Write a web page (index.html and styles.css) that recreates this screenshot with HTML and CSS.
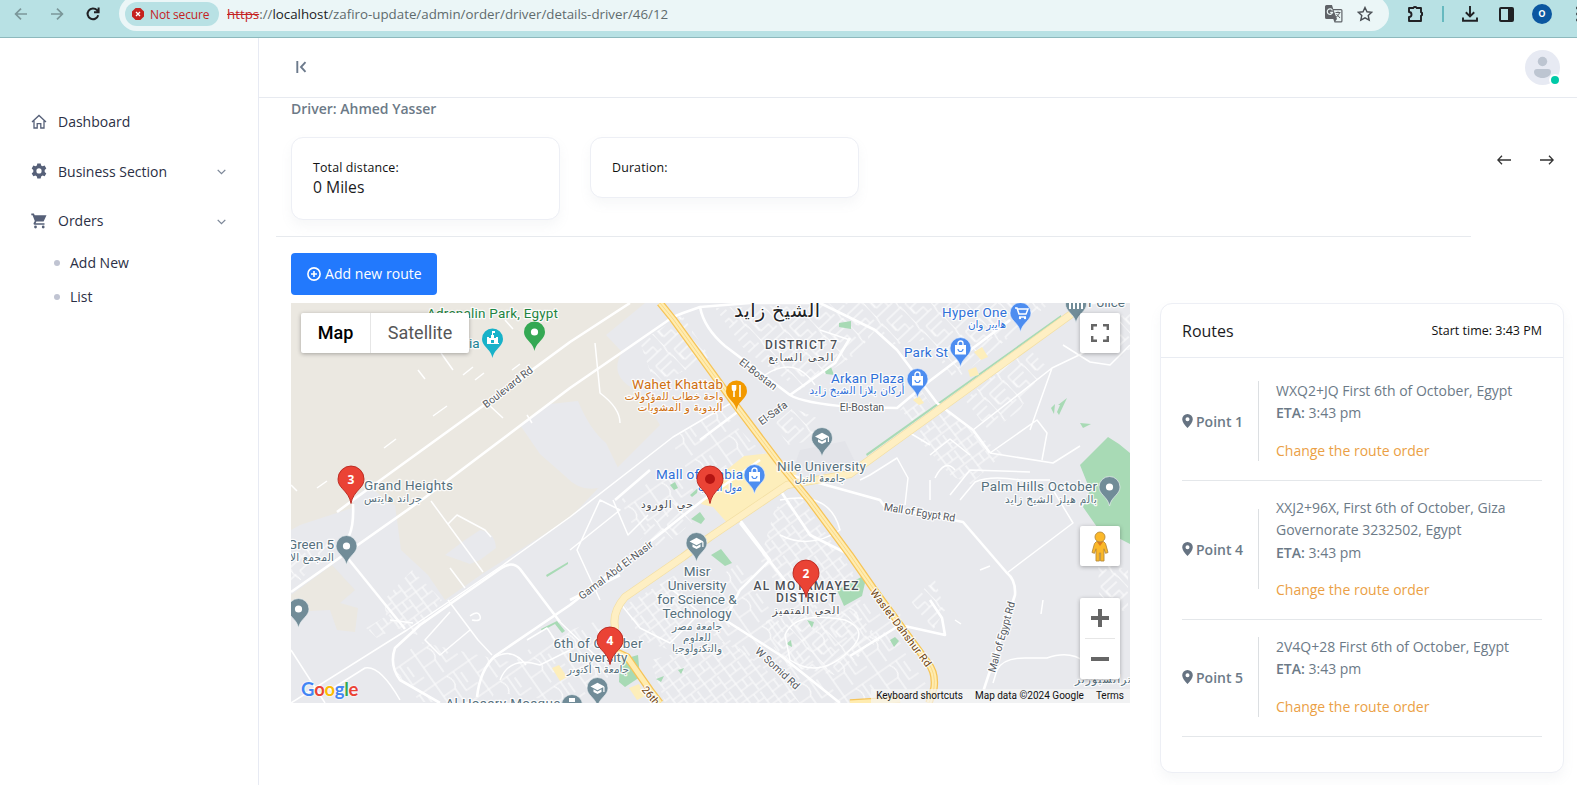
FILE: index.html
```html
<!DOCTYPE html>
<html lang="en">
<head>
<meta charset="utf-8">
<title>Driver details</title>
<link rel="stylesheet" href="styles.css">
</head>
<body>
<div class="browser">
  <div class="nav-btns">
    <svg width="14" height="14" viewBox="0 0 14 14" class="ico dim"><path d="M13 7H2M7 1.6L1.6 7L7 12.4"/></svg>
    <svg width="14" height="14" viewBox="0 0 14 14" class="ico dim"><path d="M1 7h11M7 1.6L12.400 7L7 12.400"/></svg>
    <svg width="14" height="14" viewBox="0 0 14 14" class="ico dark"><path d="M12.200 8.200A5.400 5.400 0 1 1 11 3.200L12.500 5M12.600 .6V5.200H8"/></svg>
  </div>
  <div class="omnibox">
    <div class="chip">
      <svg width="12" height="12" viewBox="0 0 12 12"><path fill="#c5221f" d="M3.600 0h4.800L12 3.600v4.800L8.400 12H3.600L0 8.400V3.600z"/><path d="M4 4l4 4M8 4l-4 4" stroke="#fff" stroke-width="1.300"/></svg>
      <span>Not secure</span>
    </div>
    <div class="url"><s>https</s>://<b>localhost</b>/zafiro-update/admin/order/driver/details-driver/46/12</div>
    <svg class="translate" width="18" height="18" viewBox="0 0 18 18"><path fill="#5f6368" d="M1.500 0H7l1.200 4H16a1.500 1.500 0 0 1 1.500 1.500v10.500a1.500 1.500 0 0 1-1.500 1.500H9.500L8.300 14H1.500A1.500 1.500 0 0 1 0 12.500v-11A1.500 1.500 0 0 1 1.500 0z"/><path fill="#eaf6f6" d="M8.600 5.200H16.300V16.300H10.300L12 14z"/><path d="M7.400 5.400A2.700 2.700 0 1 0 7.600 7.300H5.200" fill="none" stroke="#eaf6f6" stroke-width="1.200"/><path d="M10.500 7.500h5M13 6.500v1M14.500 7.700c-.5 2-2 3.600-3.500 4.400M11.500 9l3.500 4" fill="none" stroke="#5f6368"/></svg>
    <svg width="16" height="16" viewBox="0 0 16 16"><path d="M8 1.500l2 4.300 4.700.5-3.500 3.200 1 4.700L8 11.800l-4.200 2.400 1-4.700L1.300 6.300 6 5.800z" fill="none" stroke="#4a4f54" stroke-width="1.400"/></svg>
  </div>
  <div class="tools">
    <svg width="18" height="18" viewBox="0 0 18 18"><path d="M2 3h4.200a2 2 0 0 1 3.600 0H14v4.200a2 2 0 0 1 0 3.600V16H2v-4a2.500 2.500 0 0 0 0-5z" fill="none" stroke="#202124" stroke-width="1.900" stroke-linejoin="round"/><path d="M6.500 1.500h3V3h-3zM14.500 7.500H16v3h-1.500z" fill="#202124"/></svg>
    <i class="sep"></i>
    <svg class="dl" width="16" height="18" viewBox="0 0 16 18"><path d="M8 1v10M3.800 7.300L8 11.400l4.200-4.100M1 12.500v3.300h14v-3.300" fill="none" stroke="#202124" stroke-width="1.900"/></svg>
    <svg class="panel" width="15" height="15" viewBox="0 0 15 15"><rect x="1" y="1" width="13" height="13" rx="1" fill="none" stroke="#202124" stroke-width="2"/><path d="M9 1h5v13H9z" fill="#202124"/></svg>
    <span class="profile">o</span>
    <svg class="more" width="4" height="18" viewBox="0 0 4 18" fill="#202124"><circle cx="2" cy="3" r="1.800"/><circle cx="2" cy="9" r="1.800"/><circle cx="2" cy="15" r="1.800"/></svg>
  </div>
</div>

<div class="shell">
  <aside class="sidebar">
    <a class="nav"><svg width="16" height="16" viewBox="0 0 16 16"><path d="M1 8L8 1.500 15 8M3 6.800V14h3.200V9.700h3.600V14H13V6.800" fill="none" stroke="#566078" stroke-width="1.300"/></svg><span>Dashboard</span></a>
    <a class="nav"><svg width="16" height="16" viewBox="0 0 16 16"><path fill="#566078" fill-rule="evenodd" d="M6.300.5h3.400l.4 2 1.500.8 2-.7 1.700 2.900-1.600 1.400v2l1.600 1.500-1.700 2.900-2-.7-1.500.8-.4 2.100H6.300l-.4-2.100-1.500-.8-2 .7L.7 10.400l1.600-1.500v-2L.7 5.500l1.700-2.900 2 .7 1.500-.8zM8 5.300a2.600 2.600 0 1 0 0 5.200 2.600 2.600 0 0 0 0-5.200z"/></svg><span>Business Section</span><svg class="chev" width="9" height="6" viewBox="0 0 9 6"><path d="M.7.900L4.500 4.700 8.300.9"/></svg></a>
    <a class="nav"><svg width="16" height="16" viewBox="0 0 16 16" fill="#566078"><path d="M.3.600h2.600l.8 1.600H15.500L12.600 8.600H5.400L4.600 10.200h8.900v1.500H3.600c-1 0-1.300-1-.9-1.700l1.100-2L1.600 2.200H.3z"/><circle cx="4.500" cy="14" r="1.400"/><circle cx="12.200" cy="14" r="1.400"/></svg><span>Orders</span><svg class="chev" width="9" height="6" viewBox="0 0 9 6"><path d="M.7.900L4.500 4.700 8.300.9"/></svg></a>
    <a class="sub">Add New</a>
    <a class="sub">List</a>
  </aside>

  <div class="main">
    <header class="topbar">
      <svg width="11" height="12" viewBox="0 0 11 12"><path d="M1.300 0v12M9.500 1.200L5 6 9.500 10.800" fill="none" stroke="#6c7a8c" stroke-width="1.900"/></svg>
      <div class="avatar"><svg width="35" height="35" viewBox="0 0 35 35"><circle cx="17.500" cy="17.500" r="17.500" fill="#e7eaf3"/><circle cx="17.500" cy="11.500" r="4.700" fill="#bdc5d1"/><path d="M9 22a3 3 0 0 1 3-3h11a3 3 0 0 1 3 3c0 3.500-4 6-8.500 6S9 25.500 9 22z" fill="#bdc5d1"/></svg><i></i></div>
    </header>

    <div class="driver">Driver: Ahmed Yasser</div>
    <div class="stats">
      <div class="card stat"><small>Total distance:</small><div>0 Miles</div></div>
      <div class="card stat"><small>Duration:</small></div>
      <div class="pager">
        <svg width="14" height="10" viewBox="0 0 14 10"><path d="M14 5H1M5 .7L.8 5 5 9.300"/></svg>
        <svg width="14" height="10" viewBox="0 0 14 10"><path d="M0 5h13M9 .7L13.200 5 9 9.300"/></svg>
      </div>
    </div>
    <div class="rule"></div>
    <button class="add"><svg width="14" height="14" viewBox="0 0 14 14"><circle cx="7" cy="7" r="6.100"/><path d="M7 4v6M4 7h6"/></svg><span>Add new route</span></button>

    <div class="content">
      <div class="map">
        <svg class="tiles" width="839" height="400" viewBox="291 303 839 400">
          <defs>
            <pattern id="g1" width="25" height="19" patternUnits="userSpaceOnUse" patternTransform="rotate(-37)"><path d="M0 1H25M0 10H15M1 0V19M9 1V10M16 3V19M16 14H25" class="st"/></pattern>
            <pattern id="g2" width="31" height="25" patternUnits="userSpaceOnUse" patternTransform="rotate(47)"><path d="M0 2Q15 -2 31 2M2 0V20M9 5v14h8V9h7v16M2 20H16M24 4V12" class="st"/></pattern>
            <pattern id="g3" width="41" height="35" patternUnits="userSpaceOnUse" patternTransform="rotate(-35)"><path d="M0 5H41M5 0V35M19 5Q25 14 19 20H5M19 20V35M27 5V28H41M33 10v12" class="st"/></pattern>
            <path id="poi" d="M0 19C-1 14-3.500 11.500-6.500 8.200C-9 5.500-10.500 3.300-10.500 0A10.500 10.500 0 0 1 10.500 0C10.500 3.300 9 5.500 6.500 8.200C3.500 11.500 1 14 0 19z"/>
            <path id="marker" d="M0 24.500C-1 18-4.500 14-8.500 9.700C-11.500 6.500-13 4-13 0A13 13 0 0 1 13 0C13 4 11.500 6.500 8.500 9.700C4.500 14 1 18 0 24.500z"/>
            <g id="bag" fill="#fff"><path d="M-5.500-3h11V6.500h-11z"/><path d="M-2.500-3v-1.500a2.500 2.500 0 0 1 5 0V-3" fill="none" stroke="#fff" stroke-width="1.400"/><path d="M-2.500 1a2.500 2.500 0 0 0 5 0" fill="none" stroke="#4d8df0" stroke-width="1.200"/></g>
            <g id="cap" fill="#fff"><path d="M-7-1.500L0-5.300 7-1.500 0 2.300zM-4 1.300L0 3.500 4 1.300V4L0 6-4 4zM5.800-1H7V4H5.800z"/></g>
          </defs>
          <rect x="291" y="303" width="839" height="400" fill="#e8e9ed"/>
          <path fill="#ebe8e1" d="M291 303H645L606 335 622 352Q607 378 640 392L660 425 620 465 570 518 482 574 445 600 428 575 401 550 395 505 378 500 352 508 300 525 291 530z"/>
          <path fill="#e8e9ed" d="M520 425L550 404 578 401Q590 430 606 443L621 474 598 488Q580 492 565 476L540 454zM445 555L465 540 480 530Q495 532 496 548L480 560 470 564zM352 499l17-14 14 13-10 13-18-3z"/>
          <path fill="#ebe8e1" d="M291 595L332 565 355 590 340 603 358 608 355 632 337 630 330 610 291 612z"/>

          <g opacity=".85">
          <path fill="url(#g2)" d="M640 342L682 315 710 357 655 386zM775 423l18-15 24 10-6 23-24 4z"/>
          <path fill="url(#g2)" d="M715 308L840 303 880 325 855 355 800 390 745 350zM845 303H1050L1000 345 955 380 925 340 890 345zM965 400l60-55 20 20-25 45-30 22z"/>
          <path fill="url(#g1)" d="M915 435l30-25 58 44-32 30-20-8zM900 410l20-22 12 18-20 15zM384 600l28-30 30 30-25 35-30-10zM366 628l24-14 10 12-23 12z"/>
          <path fill="url(#g3)" d="M670 440L720 410 765 455 735 490 690 475zM620 500l50-30 30 20-60 50z"/>
          <path fill="url(#g1)" d="M775 508L800 496 855 575 800 618 760 560zM625 605L675 575 690 610 670 650 640 640zM650 660L730 640 790 690 800 703H665z"/>
          <path fill="url(#g3)" d="M705 585L745 560 770 610 860 600 900 645 930 690 910 703H800L760 665 705 630zM480 690L540 640 600 620 610 690 570 703zM850 600l50 10 5 60-45-20zM390 665l30-23 90 20-20 40H420z"/>
          <path fill="url(#g2)" d="M640 530l35-30 20 20-35 30zM910 600l25-20 10 30-12 20zM291 545l40-5-30 40-10 2zM1100 330l30-20v40h-20zM1098 560l30 10v40l-28 5zM765 620l90-10 25 30-45 35-55-10z"/>
          </g>

          <g fill="#a8dab5">
            <path d="M1080 465L1108 437 1119 444 1130 453V544L1097 527 1083 507 1090 490zM837 590l30-16-5 22-18 10zM711 555l10-6 11 14-7 3zM691 519l9-7 5 7-4 5zM620 660l18-5 2 22-15 10-6-5zM541 629l16-8 8 10-3 2-7-9-13 7zM546 575l22-13v2l-21 13zM1051 408l4-4 -1 10zM1058 405l9-7-8 17-2-3 3-7zM1080 423l11 1-8 4zM839 323l12-2v8l-12-2zM824 369l7-2 3 8-8-1zM670 485l5-3 3 6-4 2zM690 495l8-7-1 5-5 4zM656 679l8-3-3 6zM678 670l6-2-3 6zM786 644l5-4 1 7zM807 620l7 2-2 6zM890 640l5-3 4 4-5 6z"/>
            <path d="M866 454L1061 315 1061 317 867 456z"/>
          </g>
          <g fill="#fdeebb"><path d="M701 504l18-28 25-20 28-3 25 20-18 22-50 30-16-18zM974 352l8-5 6 10-7 3zM968 370l8-3 3 8-9 2zM913 400l6-4 5 7-5 2zM552 668l7-3 8 12-7 4zM629 688l10-4 6 12-8 4z"/></g>
          <path fill="#e3e4e9" d="M800 450l45-9 10 21-30 12-30-10z"/>

          <g class="road">
            <path d="M337 512L353 500 487 403 570 342 630 303"/>
            <path d="M291 592L423 499 570 388 673 317"/>
            <path d="M353 504Q354 525 349 536L346 556 405 629"/>
            <path class="n" d="M291 703L407 630 503 565 570 517 673 437 707 417 745 395"/>
            <path d="M440 703L400 680Q389 665 395 648L420 625 500 569Q512 560 520 569L560 622"/>
            <path d="M477 697Q480 670 495 656L570 605 703 500 760 460"/>
            <path d="M673 317L683 313 700 307Q704 328 725 346L790 395Q803 403 850 407L897 408 927 383 1010 320"/>
            <path d="M790 395L835 363 850 338M700 307L750 303M748 303L820 303 875 330 897 350 937 403 973 430 990 453"/>
            <path class="n" d="M990 453L1037 420 1047 433 1042 460M990 453L1053 463 1080 446M973 430L1052 368 1100 345M1052 368L1030 430M1063 345L1090 362 1110 365 1130 345"/>
            <path d="M790 475L880 500 885 507 963 522 1007 573Q1016 580 1015 595L983 692"/>
            <path class="n" d="M1007 573L1073 523 1050 485M860 480L870 475 897 458 908 478 905 505M960 500L975 482Q990 475 1020 480L1050 480M930 500L930 480M950 495l20-25 60 2"/>
            <path class="n" d="M993 683L997 670Q1003 658 1025 658L1047 658Q1070 650 1085 662"/>
            <path class="n" d="M431 501L483 572M448 524L457 515 485 530 491 537M450 568L465 588M448 600L478 640 492 655M450 612L425 640 440 655 470 630"/>
            <path d="M570 600L620 575M615 500L650 470M740 520L770 560 740 590 725 620M740 523L800 600M725 620L780 655 840 703"/>
            <path class="n" d="M560 622L600 660M413 623L390 620M291 650L325 703M330 690L365 668Q380 665 400 700M570 550L620 510 600 500 577 550 600 600M613 500l15 35 20-20M620 603l20 25 30 15 30-30-30-25"/>
            <path d="M850 656L900 625 945 635 942 618 930 600M780 490l30 45 40 20M770 453L740 410 700 440"/>
          </g>
          <g class="road n">
            <path d="M595 343l5 50q20 15 20 30M441 353l12 17M418 370l7 9M463 375l10-8M475 380l9-7M433 416l14-10M384 448l12-9M489 405l14 13M527 415l5 8M505 320l8 9M490 350l12-8M291 485l6 6M317 488l10-7M512 370l8-6M1043 600l-2 14M980 570l10-4M955 620l6 4"/>
            <path d="M765 375q30-20 50 10M820 330l30 10M780 500q50-10 60 30q-30 20-60 5M790 660q30 20 60-10q20-20-5-30q-50-10-60 15z"/>
            <path d="M491 660q20-15 35 5M500 680q10-25 40-15l30-15M527 640l20-12 10 15M470 616q8-6 10 0t-8 4M930 455l20-16 20 16M935 478q10-20 20-8M905 430l25 15"/>
          </g>

          <g class="hw o"><path d="M1077 310L850 474 787 485 710 537 683 557 625 597Q612 612 615 627L610 645"/></g>
          <g class="hw i"><path d="M1077 310L850 474 787 485 710 537 683 557 625 597Q612 612 615 627L610 645"/></g>
          <path class="hwm o" d="M660 303L673 319 737 407 783 468 810 501 850 555 873 588 928 663Q936 673 934 688L929 703M612 650L627 657 650 690 660 703M850 703L900 700"/>
          <path class="hwm i" d="M660 303L673 319 737 407 783 468 810 501 850 555 873 588 928 663Q936 673 934 688L929 703M612 650L627 657 650 690 660 703M850 703L900 700"/>
          <path class="hwm m" d="M660 303L673 319 737 407 783 468 810 501 850 555 873 588 928 663Q936 673 934 688L929 703"/>

          <g class="lb slate">
            <text x="364" y="490" textLength="89">Grand Heights</text>
            <text x="288" y="549" textLength="46">Green 5</text>
            <text x="777" y="471" textLength="89">Nile University</text>
            <text x="981" y="491" textLength="116">Palm Hills October</text>
            <text x="1088" y="307">Police</text>
            <g text-anchor="middle">
              <text x="697" y="576">Misr</text><text x="697" y="590">University</text><text x="697" y="604">for Science &amp;</text><text x="697" y="618">Technology</text>
              <text x="598" y="648" textLength="89">6th of October</text><text x="598" y="662">University</text>
              <text x="503" y="708" textLength="115">Al Hosary Mosque</text>
            </g>
          </g>
          <g class="lb ar slate" text-anchor="middle">
            <text x="393" y="502" textLength="58">جراند هايتس</text>
            <text x="312" y="561" textLength="44">المجمع الا</text>
            <text x="820" y="482" textLength="51">جامعة النيل</text>
            <text x="1051" y="503" textLength="92">بالم هيلز الشيخ زايد</text>
            <text x="697" y="630" textLength="50">جامعة مصر</text><text x="697" y="641" textLength="28">للعلوم</text><text x="697" y="652" textLength="50">والتكنولوجيا</text>
            <text x="598" y="673" textLength="62">جامعة ٦ أكتوبر</text>
            <text x="1103" y="683" textLength="56">ترانسبورتر</text>
          </g>
          <g class="lb blue">
            <text x="656" y="479" textLength="87">Mall of Arabia</text>
            <text x="942" y="317" textLength="65">Hyper One</text>
            <text x="904" y="357" textLength="44">Park St</text>
            <text x="831" y="383" textLength="73">Arkan Plaza</text>
          </g>
          <g class="lb ar blue" text-anchor="middle">
            <text x="720" y="491" textLength="44">مول العرب</text><text x="987" y="328" textLength="38">هايبر وان</text><text x="857" y="394" textLength="95">أركان بلازا الشيخ زايد</text>
          </g>
          <g class="lb green"><text x="427" y="318" textLength="131">Adrenalin Park, Egypt</text></g>
          <g class="lb teal"><text x="469" y="348">ia</text></g>
          <g class="lb orange"><text x="632" y="389" textLength="91">Wahet Khattab</text></g>
          <g class="lb ar orange" text-anchor="middle"><text x="674" y="400" textLength="99">واحة خطاب للمؤكولات</text><text x="680" y="411" textLength="85">البدوية و المشويات</text></g>
          <g class="lb dist" text-anchor="middle"><text x="801" y="349" textLength="72">DISTRICT 7</text><text x="806" y="590" textLength="105">AL MOTAMAYEZ</text><text x="806" y="602" textLength="60">DISTRICT</text></g>
          <g class="lb ar dist2" text-anchor="middle"><text x="801" y="361" textLength="65">الحى السابع</text><text x="806" y="614" textLength="67">الحي المتميز</text><text x="667" y="508" textLength="52">حي الورود</text></g>
          <text class="lb city" x="777" y="317" text-anchor="middle" textLength="86">الشيخ زايد</text>
          <g class="lb rd" text-anchor="middle">
            <text transform="translate(510 390) rotate(-38)" textLength="60">Boulevard Rd</text>
            <text transform="translate(756 377) rotate(38)">El-Bostan</text>
            <text transform="translate(775 416) rotate(-36)">El-Safa</text>
            <text transform="translate(862 411)">El-Bostan</text>
            <text transform="translate(919 516) rotate(9)" textLength="72">Mall of Egypt Rd</text>
            <text transform="translate(1005 638) rotate(-74)" textLength="73">Mall of Egypt Rd</text>
            <text transform="translate(618 573) rotate(-37)" textLength="90">Gamal Abd El-Nasir</text>
            <text transform="translate(775 671) rotate(43)" textLength="56">W Somid Rd</text>
          </g>
          <g class="lb rd brown" text-anchor="middle"><text transform="translate(898 630) rotate(53)" textLength="94">Waslet Dahshur Rd</text><text transform="translate(648 698) rotate(50)">26th</text></g>

          <g fill="#718c98" stroke="#e9eef0" stroke-width=".7">
            <use href="#poi" x="822" y="438"/><use href="#poi" x="1109.500" y="487"/><use href="#poi" x="346.500" y="546"/><use href="#poi" x="298.500" y="609"/><use href="#poi" x="696.500" y="543"/><use href="#poi" x="597.500" y="688"/><use href="#poi" x="572" y="705"/><use href="#poi" x="1076" y="304"/>
          </g>
          <use href="#cap" x="822" y="438"/><use href="#cap" x="696.500" y="543"/><use href="#cap" x="597.500" y="688"/>
          <path d="M1069 309v-6h2v6zM1073 309v-8h2v8zM1077 309v-8h2v8zM1081 309v-6h2v6zM569 702v-4h6v4z" fill="#fff"/>
          <g fill="#fff"><circle cx="1109.500" cy="487" r="3.600"/><circle cx="346.500" cy="546" r="3.600"/><circle cx="298.500" cy="609" r="3.600"/></g>
          <g fill="#4d8df0" stroke="#e4edfb" stroke-width=".7"><use href="#poi" x="754.500" y="475"/><use href="#poi" x="960.500" y="348"/><use href="#poi" x="917.500" y="379"/><use href="#poi" x="1020.500" y="313"/></g>
          <use href="#bag" x="754.500" y="475"/><use href="#bag" x="960.500" y="348"/><use href="#bag" x="917.500" y="379"/>
          <path d="M1015 308h2l2 6h7l2-5h-10M1019 317h7" fill="none" stroke="#fff" stroke-width="1.500"/><circle cx="1020" cy="318" r="1.200" fill="#fff"/><circle cx="1025" cy="318" r="1.200" fill="#fff"/>
          <use href="#poi" x="492.500" y="339" fill="#18b2c9"/><path fill="#fff" d="M487 343v-6h2v1h2v-3h1v-4h3v2h-2v2h1v3h2v-1h2v6h1v1h-12v-1zM491 343h3v-3h-3z" fill-rule="evenodd"/>
          <use href="#poi" x="534.500" y="332" fill="#34a853"/><circle cx="534.500" cy="332" r="3.600" fill="#fff"/>
          <use href="#poi" x="736.500" y="391" fill="#f29900"/><path d="M732.500 385v4q0 1.500 1.500 1.500T735.500 389v-4M734 385v12M740 385v12" fill="none" stroke="#fff" stroke-width="1.600"/>
          <g fill="#ea4335" stroke="#b8251c" stroke-width=".9"><use href="#marker" x="351" y="479"/><use href="#marker" x="710" y="479"/><use href="#marker" x="806" y="573"/><use href="#marker" x="610" y="640"/></g>
          <circle cx="710" cy="479" r="5" fill="#b31412"/>
          <g class="num" text-anchor="middle"><text x="351" y="484">3</text><text x="806" y="577.500">2</text><text x="610" y="645">4</text></g>
        </svg>
        <div class="maptype"><span class="on">Map</span><span>Satellite</span></div>
        <div class="ctl full"><svg width="18" height="18" viewBox="0 0 18 18"><path d="M1.200 6V1.200H6M12 1.200h4.800V6M16.800 12v4.800H12M6 16.800H1.200V12" fill="none" stroke="#666" stroke-width="2.400"/></svg></div>
        <div class="ctl peg"><svg width="18" height="31" viewBox="0 0 18 31"><path d="M5.500 10.500h7l2 2 2.500 9-2.500.8-1.500-4.500V30H9.600v-8H8.400v8H5V17.800L3.500 22.300 1 21.500l2.500-9z" fill="#fbb829" stroke="#b58a3c" stroke-width=".9"/><path d="M5.800 10.800h6.400L9 15z" fill="#e07b1c"/><circle cx="9" cy="6" r="5" fill="#fbb829" stroke="#b58a3c" stroke-width=".9"/></svg></div>
        <div class="ctl zoom"><svg width="18" height="18" viewBox="0 0 18 18"><path d="M7 0h4v7h7v4h-7v7H7v-7H0V7h7z" fill="#666"/></svg><i></i><svg width="18" height="4"><rect width="18" height="4" fill="#666"/></svg></div>
        <div class="google"><span class="b">G</span><span class="r">o</span><span class="y">o</span><span class="b">g</span><span class="g">l</span><span class="r">e</span></div>
        <div class="credits"><span>Keyboard shortcuts</span><span>Map data ©2024 Google</span><span>Terms</span></div>
      </div>

      <div class="card routes">
        <div class="rhead"><h4>Routes</h4><small>Start time: 3:43 PM</small></div>
        <div class="rbody">
          <div class="item"><div class="pt"><svg width="11" height="14" viewBox="0 0 11 14"><path fill-rule="evenodd" d="M5.500 0A5.300 5.300 0 0 0 .2 5.300C.2 8 2.500 11 5.500 14 8.500 11 10.800 8 10.800 5.300A5.300 5.300 0 0 0 5.500 0zm0 3.300a2 2 0 1 1 0 4 2 2 0 0 1 0-4z"/></svg>Point 1</div><div class="info"><p>WXQ2+JQ First 6th of October, Egypt</p><p><b>ETA:</b> 3:43 pm</p><a>Change the route order</a></div></div>
          <div class="item"><div class="pt"><svg width="11" height="14" viewBox="0 0 11 14"><path fill-rule="evenodd" d="M5.500 0A5.300 5.300 0 0 0 .2 5.300C.2 8 2.500 11 5.500 14 8.500 11 10.800 8 10.800 5.300A5.300 5.300 0 0 0 5.500 0zm0 3.300a2 2 0 1 1 0 4 2 2 0 0 1 0-4z"/></svg>Point 4</div><div class="info"><p>XXJ2+96X, First 6th of October, Giza Governorate 3232502, Egypt</p><p><b>ETA:</b> 3:43 pm</p><a>Change the route order</a></div></div>
          <div class="item"><div class="pt"><svg width="11" height="14" viewBox="0 0 11 14"><path fill-rule="evenodd" d="M5.500 0A5.300 5.300 0 0 0 .2 5.300C.2 8 2.500 11 5.500 14 8.500 11 10.800 8 10.800 5.300A5.300 5.300 0 0 0 5.500 0zm0 3.300a2 2 0 1 1 0 4 2 2 0 0 1 0-4z"/></svg>Point 5</div><div class="info"><p>2V4Q+28 First 6th of October, Egypt</p><p><b>ETA:</b> 3:43 pm</p><a>Change the route order</a></div></div>
        </div>
      </div>
    </div>
  </div>
</div>
</body>
</html>
```
FILE: styles.css
```css
* { box-sizing: border-box; }
body { margin: 0; width: 1577px; height: 785px; overflow: hidden; background: #fff; font-family: "Open Sans", sans-serif; font-size: 14px; color: #6c7a87; display: flex; flex-direction: column; }
p, h4 { margin: 0; }
.browser { height: 38px; flex: none; background: #b8e1e4; border-bottom: 1px solid #8db9bd; display: flex; overflow: hidden; }
.nav-btns { width: 119px; height: 28px; flex: none; padding-left: 14px; display: flex; gap: 22px; align-items: center; }
.ico { fill: none; stroke-width: 1.700; }
.dim { stroke: #7b9799; }
.dark { stroke: #202124; stroke-width: 2; }
.omnibox { width: 1270px; flex: none; height: 35px; margin-top: -4px; padding: 4px 16px 3px 6px; background: #ebf6f7; border-radius: 18px; display: flex; align-items: center; }
.chip { width: 94px; height: 24px; border-radius: 12px; background: #b8e1e4; display: flex; align-items: center; gap: 6px; padding-left: 7px; color: #c5221f; font-size: 12px; letter-spacing: -.15px; white-space: nowrap; }
.url { margin-left: 8px; flex: 1; font-size: 13.320px; white-space: nowrap; color: #5f6b6d; }
.url s { color: #c5221f; }
.url b { font-weight: 400; color: #202124; }
.translate { margin-right: 14px; }
.tools { display: flex; align-items: center; height: 28px; padding-left: 18px; flex: none; }
.sep { width: 2px; height: 16px; background: #66b9bf; margin: 0 18px 0 17px; }
.panel { margin-left: 21px; }
.profile { width: 20px; height: 20px; border-radius: 50%; background: #0b57a0; color: #fff; font-size: 12px; font-weight: 600; line-height: 18px; text-align: center; margin-left: 18px; }
.more { margin-left: 24px; flex: none; }
.shell { display: flex; flex: 1; min-height: 0; }
.sidebar { width: 259px; flex: none; border-right: 1px solid #e7eaf3; padding-top: 59px; color: #2b2f45; }
.nav { display: flex; align-items: center; height: 49.500px; padding: 0 32px 0 31px; gap: 11px; }
.nav span { flex: 1; }
.chev { fill: none; stroke: #7c8798; stroke-width: 1.300; position: relative; top: 1px; }
.sub { display: flex; align-items: center; gap: 10px; height: 34px; padding-left: 54px; }
.sub::before { content: ""; width: 6px; height: 6px; border-radius: 50%; background: #c0c4d2; }
.main { flex: 1; min-width: 0; }
.topbar { height: 60px; border-bottom: 1px solid #e7eaf0; display: flex; align-items: center; justify-content: space-between; padding: 0 17px 0 37px; }
.topbar > svg { margin-top: -2px; }
.avatar { position: relative; height: 35px; }
.avatar i { position: absolute; right: -1px; bottom: -1px; width: 12px; height: 12px; border-radius: 50%; background: #00c9a7; border: 2px solid #fff; }
.driver { padding-left: 32px; height: 39px; line-height: 22px; font-weight: 600; }
.stats { display: flex; align-items: flex-start; gap: 30px; height: 99px; padding-left: 32px; }
.card { background: #fff; border: 1px solid #edeff5; border-radius: 12px; box-shadow: 0 6px 12px rgba(140,152,164,.075); }
.stat { width: 269px; height: 61px; padding: 20px 21px; color: #1b1b1e; font-size: 15.700px; line-height: 19px; }
.stat:first-child { height: 83px; }
.stat small { display: block; font-size: 12.400px; letter-spacing: .15px; line-height: 20px; color: #111; }
.pager { margin-left: auto; padding: 18px 23px 0 0; display: flex; gap: 29px; }
.pager svg { fill: none; stroke: #333; stroke-width: 1.300; }
.rule { width: 1195px; height: 1px; background: #e7eaee; margin-left: 17px; }
.add { display: flex; align-items: center; gap: 4px; width: 146px; height: 42px; margin: 16px 0 8px 32px; padding: 0 0 0 16px; border: 0; border-radius: 4px; background: #2279fd; color: #fff; font: 14px "Open Sans", sans-serif; white-space: nowrap; }
.add span { padding-bottom: 2px; letter-spacing: .05px; }
.add svg { fill: none; stroke: #fff; stroke-width: 1.600; flex: none; }
.content { display: flex; gap: 30px; padding-left: 32px; align-items: flex-start; }
.map { position: relative; width: 839px; height: 400px; overflow: hidden; font-family: Roboto, sans-serif; flex: none; }
.tiles { display: block; }
.st { fill: none; stroke: #fff; stroke-width: 1.200; }
.road { fill: none; stroke: #fff; stroke-width: 2.600; stroke-linejoin: round; }
.road .n, .road.n { stroke-width: 1.500; }
.hw { fill: none; stroke-linejoin: round; }
.hw.o { stroke: #f3dfa4; stroke-width: 8; }
.hw.i { stroke: #feefc3; stroke-width: 6.500; }
.hwm { fill: none; stroke-linejoin: round; }
.hwm.o { stroke: #f6c458; stroke-width: 7.500; }
.hwm.i { stroke: #ffecb0; stroke-width: 5; }
.hwm.m { stroke: #f8d47e; stroke-width: .8; }
.lb { font-family: Roboto, "DejaVu Sans", sans-serif; font-size: 13.500px; paint-order: stroke; stroke: #fff; stroke-width: 2.500px; stroke-linejoin: round; stroke-opacity: .85; }
.ar { font-family: "DejaVu Sans", sans-serif; font-size: 10.500px; }
.slate { fill: #56707d; }
.blue { fill: #2f70d8; }
.green { fill: #1f8441; }
.teal { fill: #1b8296; }
.orange { fill: #cf6f10; }
.dist { fill: #4b4f55; font-size: 12px; font-weight: 500; }
.dist2 { fill: #4b4f55; }
.city { fill: #202124; font-family: "DejaVu Sans", sans-serif; font-size: 19px; }
.rd { font-size: 10.500px; fill: #55595e; }
.rd.brown { fill: #6d4312; }
.num { fill: #fff; font: 700 12px "Open Sans", sans-serif; }
.maptype { position: absolute; left: 10px; top: 10px; width: 168px; height: 40px; display: flex; background: #fff; border-radius: 2px; box-shadow: 0 1px 4px rgba(0,0,0,.3); font-size: 18px; line-height: 40px; color: #565656; }
.maptype span { flex: 1; text-align: center; }
.maptype .on { flex: none; width: 70px; color: #000; font-weight: 500; border-right: 1px solid #e6e6e6; }
.ctl { position: absolute; left: 789px; width: 40px; height: 40px; background: #fff; border-radius: 2px; box-shadow: 0 1px 4px rgba(0,0,0,.3); display: flex; flex-direction: column; align-items: center; justify-content: center; }
.full { top: 10px; }
.peg { top: 223px; }
.zoom { top: 295px; height: 81px; justify-content: flex-start; padding-top: 11px; }
.zoom i { width: 30px; height: 1px; margin: 11px 0 18px; background: #e6e6e6; }
.google { position: absolute; left: 10px; top: 372px; font: 700 18.500px/28px Lato, sans-serif; letter-spacing: -.3px; display: flex; text-shadow: 0 0 2px #fff, 0 0 2px #fff; }
.b { color: #4285f4; } .r { color: #ea4335; } .y { color: #fbbc05; } .g { color: #34a853; }
.credits { position: absolute; right: 0; bottom: 0; height: 14px; padding: 0 6px 0 5px; background: rgba(245,245,245,.7); display: flex; gap: 12px; font-size: 10px; line-height: 14px; color: #111; white-space: nowrap; }
.routes { width: 404px; height: 470px; flex: none; }
.rhead { height: 54px; padding: 0 21px; border-bottom: 1px solid #e9ecf2; display: flex; align-items: center; justify-content: space-between; color: #1b1b1e; }
.rhead h4 { font-size: 16px; font-weight: 400; }
.rhead small { font-size: 12.500px; color: #111; }
.rbody { padding: 6px 21px 0; }
.item { display: flex; align-items: center; border-bottom: 1px solid #e4e7ea; padding: 16px 0 17px; }
.pt { width: 77px; height: 80px; border-right: 1px solid #dcdfe2; display: flex; align-items: center; gap: 3px; padding-right: 2px; font-weight: 600; flex: none; }
.pt svg { fill: #667382; flex: none; }
.info { padding-left: 17px; flex: 1; line-height: 22.400px; }
.info b { font-weight: 600; }
.info a { display: block; margin-top: 15.500px; color: #eb9f45; }
```
